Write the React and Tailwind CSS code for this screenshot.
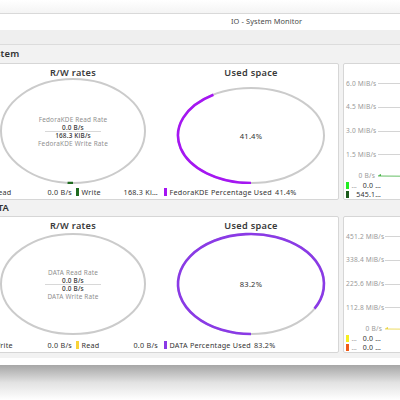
import React from 'react';

function arcPath(cx, cy, rx, ry, f) {
  const a = Math.PI + 2 * Math.PI * f;
  const x1 = cx + rx * Math.sin(a);
  const y1 = cy - ry * Math.cos(a);
  const large = f > 0.5 ? 1 : 0;
  return `M ${cx} ${cy + ry} A ${rx} ${ry} 0 ${large} 1 ${x1} ${y1}`;
}

function Ring({ cy, rx, ry, frac, color, width = 2.2, children }) {
  return (
    <div className="relative w-[178px] h-[106px]">
      <svg width="178" height="106" className="block">
        <ellipse cx="89" cy={cy} rx={rx} ry={ry} fill="none" stroke="#cbcbcb" strokeWidth="2" />
        {frac > 0 && (
          <path d={arcPath(89, cy, rx, ry, frac)} fill="none" stroke={color} strokeWidth={width} />
        )}
      </svg>
      <div className="absolute left-0 right-0 flex flex-col items-center" style={{ top: cy - 5 }}>
        {children}
      </div>
    </div>
  );
}

function RateText({ name, read, write }) {
  return (
    <div className="flex flex-col items-center text-[6.4px] leading-[7.5px] tracking-[0.2px]">
      <div className="text-[#8f8f8f]">{name} Read Rate</div>
      <div className="text-[#333] font-medium">{read}</div>
      <div className="w-[56px] h-px bg-[#d8d8d8]" />
      <div className="text-[#333] font-medium">{write}</div>
      <div className="text-[#8f8f8f]">{name} Write Rate</div>
    </div>
  );
}

function LegendItem({ color, label, value, className }) {
  return (
    <div className={'flex items-center ' + className}>
      <div className="w-[2.5px] h-[8px] shrink-0" style={{ background: color }} />
      <span className="ml-[3px] text-[#333]">{label}</span>
      {value && <span className="ml-auto text-[#333]">{value}</span>}
    </div>
  );
}

function MainCard({ name, read, write, rwTick, rwTickColor, rwCy, rwRy, usedCy, usedRy, usedFrac, purple, legend }) {
  return (
    <div className="w-[356px] h-[137px] bg-white border border-[#d6d6d6] rounded-[2px] shrink-0 flex flex-col">
      <div className="flex">
        <div className="w-[178px] flex flex-col items-center">
          <div className="h-[14px] pt-[3px] text-[9.2px] leading-[12px] font-semibold tracking-[0.3px] text-[#3a3a3a]">R/W rates</div>
          <div className="relative w-[178px] h-[106px]">
            <svg width="178" height="106" className="block">
              <ellipse cx="89" cy={rwCy} rx="72" ry={rwRy} fill="none" stroke="#cbcbcb" strokeWidth="2" />
              <path d={arcPath(89, rwCy, 72, rwRy, rwTick)} fill="none" stroke={rwTickColor} strokeWidth="2.4" />
            </svg>
            <div className="absolute left-0 right-0 flex justify-center" style={{ top: rwCy - 15 }}>
              <RateText name={name} read={read} write={write} />
            </div>
          </div>
        </div>
        <div className="w-[178px] flex flex-col items-center">
          <div className="h-[14px] pt-[3px] text-[9.2px] leading-[12px] font-semibold tracking-[0.3px] text-[#3a3a3a]">Used space</div>
          <Ring cy={usedCy} rx={73} ry={usedRy} frac={usedFrac} color={purple} width={2.6}>
            <div className="text-[7.6px] leading-[10px] tracking-[0.2px] text-[#333]">{(usedFrac * 100).toFixed(1)}%</div>
          </Ring>
        </div>
      </div>
      <div className="flex items-center h-[14px] mt-[1px] text-[7.2px] leading-[9px] tracking-[0.25px] pl-[4px]">
        <LegendItem color={legend[0].color} label={legend[0].label} value={legend[0].value} className="w-[84px]" />
        <LegendItem color={legend[1].color} label={legend[1].label} value={legend[1].value} className="w-[82px] ml-[4px]" />
        <LegendItem color={purple} label={legend[2].label} className="ml-[6px]" />
        <span className="ml-[3px] text-[#333]">{legend[2].value}</span>
      </div>
    </div>
  );
}

function SideCard({ labels, labelW, lineColor, series }) {
  return (
    <div className="w-[80px] h-[137px] bg-white border border-[#d6d6d6] rounded-[2px] shrink-0 flex flex-col pl-[2px] pt-[8px] text-[6.6px] leading-[8px] tracking-[0.2px]">
      {labels.slice(0, 4).map((l) => (
        <div key={l} className="h-[24px] flex items-center">
          <span className="text-right text-[#9a9a9a] shrink-0 whitespace-nowrap" style={{ width: labelW }}>{l}</span>
          <div className="ml-[3px] flex-1 h-px bg-[#d4d4d4]" />
        </div>
      ))}
      <div className="h-[10px] mt-[5px] flex items-center">
        <span className="text-right text-[#9a9a9a] shrink-0" style={{ width: labelW }}>0 B/s</span>
        <svg width="40" height="6" className="ml-[2px] block">
          <path d="M1 2.5 L4 1 L4 3 Z" fill={lineColor} />
          <line x1="1" y1="3" x2="40" y2="3.3" stroke={lineColor} strokeWidth="0.8" />
        </svg>
      </div>
      {series.map((s, i) => (
        <div key={i} className="h-[9px] flex items-center w-[35px]">
          <div className="w-[2.5px] h-[7.5px] shrink-0" style={{ background: s.color }} />
          {s.label && <span className="ml-[3px] text-[#999]">…</span>}
          <span className="ml-auto text-[#333] text-[7px]">{s.value}</span>
        </div>
      ))}
    </div>
  );
}

export default function App() {
  return (
    <div className="w-[400px] h-[400px] overflow-hidden bg-white flex flex-col" style={{ fontFamily: '"Noto Sans", "Open Sans", sans-serif' }}>
      <div className="h-[14px] shrink-0 bg-gradient-to-b from-white to-[#f4f4f4] border-b border-[#d9d9d9]" />
      <div className="h-[16px] shrink-0 bg-white flex items-center pl-[231px] text-[7.4px] tracking-[0.1px] text-[#4a4a4a]">IO - System Monitor</div>
      <div className="h-[15px] shrink-0 bg-[#efefef] border-b border-[#dcdcdc]" />
      <div className="shrink-0 bg-[#f2f2f2] ml-[-17px] w-[450px] flex flex-col">
        <div className="h-[18px] flex items-center pl-[2px] text-[9.4px] font-semibold tracking-[0.2px] text-[#333]">System</div>
        <div className="flex gap-[4px]">
          <MainCard
            name="FedoraKDE"
            read="0.0 B/s"
            write="168.3 KiB/s"
            rwTick={0.012}
            rwTickColor="#1f6b1f"
            rwCy={53}
            rwRy={52}
            usedCy={57.5}
            usedRy={47.5}
            usedFrac={0.414}
            purple="#a516f2"
            legend={[
              { color: '#2fe02f', label: 'Read', value: '0.0 B/s' },
              { color: '#1f6b1f', label: 'Write', value: '168.3 Ki…' },
              { label: 'FedoraKDE Percentage Used', value: '41.4%' },
            ]}
          />
          <SideCard
            labels={['6.0 MiB/s', '4.5 MiB/s', '3.0 MiB/s', '1.5 MiB/s']}
            labelW="29px"
            lineColor="#3fae3f"
            series={[
              { color: '#22ee22', label: true, value: '0.0 …' },
              { color: '#1a5a1a', label: false, value: '545.1…' },
            ]}
          />
        </div>
        <div className="h-[16px] flex items-center pl-[2px] text-[9.4px] font-semibold tracking-[0.2px] text-[#333]">DATA</div>
        <div className="flex gap-[4px]">
          <MainCard
            name="DATA"
            read="0.0 B/s"
            write="0.0 B/s"
            rwTick={0}
            rwTickColor="#cbcbcb"
            rwCy={53}
            rwRy={50}
            usedCy={53}
            usedRy={50}
            usedFrac={0.832}
            purple="#8a3ae6"
            legend={[
              { color: '#f0601a', label: 'Write', value: '0.0 B/s' },
              { color: '#f8d338', label: 'Read', value: '0.0 B/s' },
              { label: 'DATA Percentage Used', value: '83.2%' },
            ]}
          />
          <SideCard
            labels={['451.2 MiB/s', '338.4 MiB/s', '225.6 MiB/s', '112.8 MiB/s']}
            labelW="36px"
            lineColor="#e8d23a"
            series={[
              { color: '#f6ee20', label: true, value: '0.0 …' },
              { color: '#f05a18', label: true, value: '0.0 …' },
            ]}
          />
        </div>
        <div className="h-[5px]" />
      </div>
      <div className="h-[7px] shrink-0 bg-white" />
      <div className="flex-1 bg-gradient-to-b from-[#a6a6a6] via-[#e2e2e2] to-white" />
    </div>
  );
}
